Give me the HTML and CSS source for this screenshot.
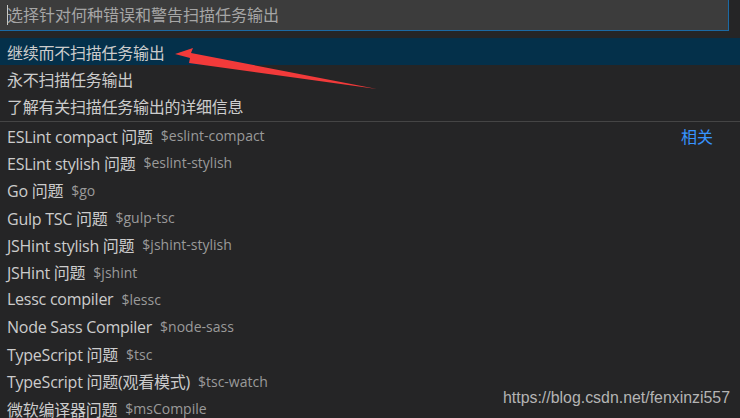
FILE: index.html
```html
<!DOCTYPE html>
<html lang="zh-CN">
<head>
<meta charset="utf-8">
<title>Quick Pick</title>
<link rel="stylesheet" href="styles.css">
</head>
<body>
<div class="picker">
  <div class="input">
    <span class="cursor"></span>
    <span class="placeholder">选择针对何种错误和警告扫描任务输出</span>
  </div>
  <ul class="list top">
    <li class="row active"><span class="label">继续而不扫描任务输出</span></li>
    <li class="row"><span class="label">永不扫描任务输出</span></li>
    <li class="row"><span class="label">了解有关扫描任务输出的详细信息</span></li>
  </ul>
  <ul class="list group">
    <li class="row"><span class="label">ESLint compact 问题</span><span class="desc">$eslint-compact</span><span class="tag">相关</span></li>
    <li class="row"><span class="label">ESLint stylish 问题</span><span class="desc">$eslint-stylish</span></li>
    <li class="row"><span class="label">Go 问题</span><span class="desc">$go</span></li>
    <li class="row"><span class="label">Gulp TSC 问题</span><span class="desc">$gulp-tsc</span></li>
    <li class="row"><span class="label">JSHint stylish 问题</span><span class="desc">$jshint-stylish</span></li>
    <li class="row"><span class="label">JSHint 问题</span><span class="desc">$jshint</span></li>
    <li class="row"><span class="label">Lessc compiler</span><span class="desc">$lessc</span></li>
    <li class="row"><span class="label">Node Sass Compiler</span><span class="desc">$node-sass</span></li>
    <li class="row"><span class="label">TypeScript 问题</span><span class="desc">$tsc</span></li>
    <li class="row"><span class="label">TypeScript 问题(观看模式)</span><span class="desc">$tsc-watch</span></li>
    <li class="row"><span class="label">微软编译器问题</span><span class="desc">$msCompile</span></li>
  </ul>
</div>
<svg class="arrow" width="740" height="418" viewBox="0 0 740 418" aria-hidden="true">
  <polygon points="175,54 193,48 191,53 377,89 189,63 190,58" fill="#f23a3a"/>
</svg>
<div class="watermark">https://blog.csdn.net/fenxinzi557</div>
</body>
</html>
```

FILE: styles.css
```css
html, body {
  margin: 0;
  padding: 0;
  background: #252526;
  width: 740px;
  height: 418px;
  overflow: hidden;
}

body {
  position: relative;
  font-family: "Open Sans", "Noto Sans CJK SC", sans-serif;
  color: #cccccc;
}

.picker {
  display: flex;
  flex-direction: column;
}

.input {
  height: 30px;
  background: #3c3c3c;
  border-right: 1px solid #1b6aa5;
  border-bottom: 1px solid #1b6aa5;
  display: flex;
  align-items: center;
  margin-left: -7px;
  padding-left: 14px;
  width: 721px;
}

.cursor {
  width: 1px;
  height: 20px;
  background: #c8c8c8;
}

.placeholder {
  font-size: 16px;
  color: #a6a6a6;
  line-height: 30px;
  margin-left: -1px;
}

.list {
  list-style: none;
  margin: 0;
  padding: 0;
}

.top {
  margin-top: 7px;
  border-bottom: 1px solid #454545;
  padding-bottom: 2px;
}

.top .row {
  height: 27px;
}

.group .row {
  height: 27.3px;
}

.row {
  display: flex;
  align-items: center;
  padding-left: 7px;
  padding-right: 27px;
  font-size: 16px;
  white-space: nowrap;
}

.row.active {
  background: #04304a;
}

.label {
  color: #cccccc;
  letter-spacing: -0.25px;
}

.desc {
  margin-left: 8px;
  font-size: 14px;
  color: #9a9a9a;
}

.tag {
  margin-left: auto;
  color: #3794ff;
  font-size: 16px;
}

.arrow {
  position: absolute;
  left: 0;
  top: 0;
  pointer-events: none;
}

.watermark {
  position: absolute;
  left: 503px;
  top: 388px;
  font-family: "Liberation Sans", Arial, sans-serif;
  font-size: 15.9px;
  color: #b4b4b4;
  line-height: 20px;
}
```
